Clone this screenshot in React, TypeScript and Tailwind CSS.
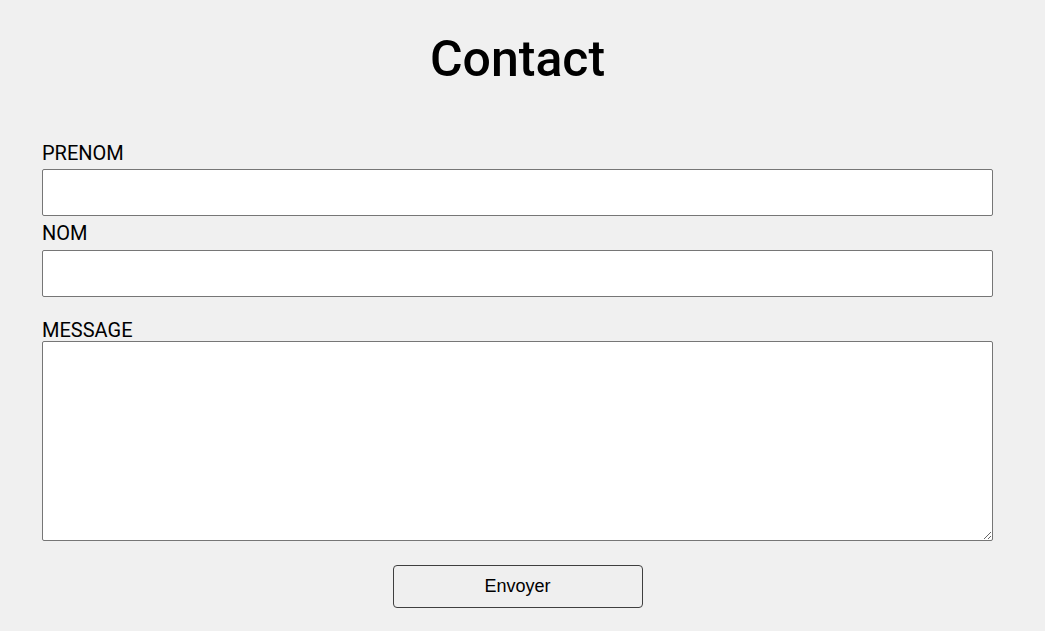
import React from "react";

const labelCls =
  "block h-[23px] text-[20px] leading-[23px] text-black font-['Roboto',sans-serif]";
const fieldCls =
  "block w-full bg-white border border-[#767676] rounded-[2px] outline-none px-2 text-[16px] font-['Roboto',sans-serif]";

export default function App() {
  return (
    <div className="min-h-screen w-full bg-[#f0f0f0] font-['Roboto',sans-serif]">
      <div className="ml-[42px] w-[951px] pt-[31px]">
        {/* Title */}
        <h1 className="text-center text-[50px] leading-[57px] font-medium text-black">
          Contact
        </h1>

        <form className="mt-[54px]" onSubmit={e => e.preventDefault()}>
          <label htmlFor="prenom" className={labelCls}>
            PRENOM
          </label>
          <input id="prenom" type="text" className={`${fieldCls} mt-[4px] h-[47px]`} />

          <label htmlFor="nom" className={`${labelCls} mt-[6px]`}>
            NOM
          </label>
          <input id="nom" type="text" className={`${fieldCls} mt-[5px] h-[47px]`} />

          <label htmlFor="message" className={`${labelCls} mt-[22px]`}>
            MESSAGE
          </label>
          <textarea id="message" className={`${fieldCls} -mt-[1px] h-[200px] py-1`} />

          <div className="flex justify-center mt-[24px]">
            <button
              type="submit"
              className="w-[250px] h-[43px] rounded-[4px] border border-[#3f3f3f] bg-[#efefef] text-[18px] text-black font-['Liberation_Sans',Arial,sans-serif]"
            >
              Envoyer
            </button>
          </div>
        </form>
      </div>
    </div>
  );
}
